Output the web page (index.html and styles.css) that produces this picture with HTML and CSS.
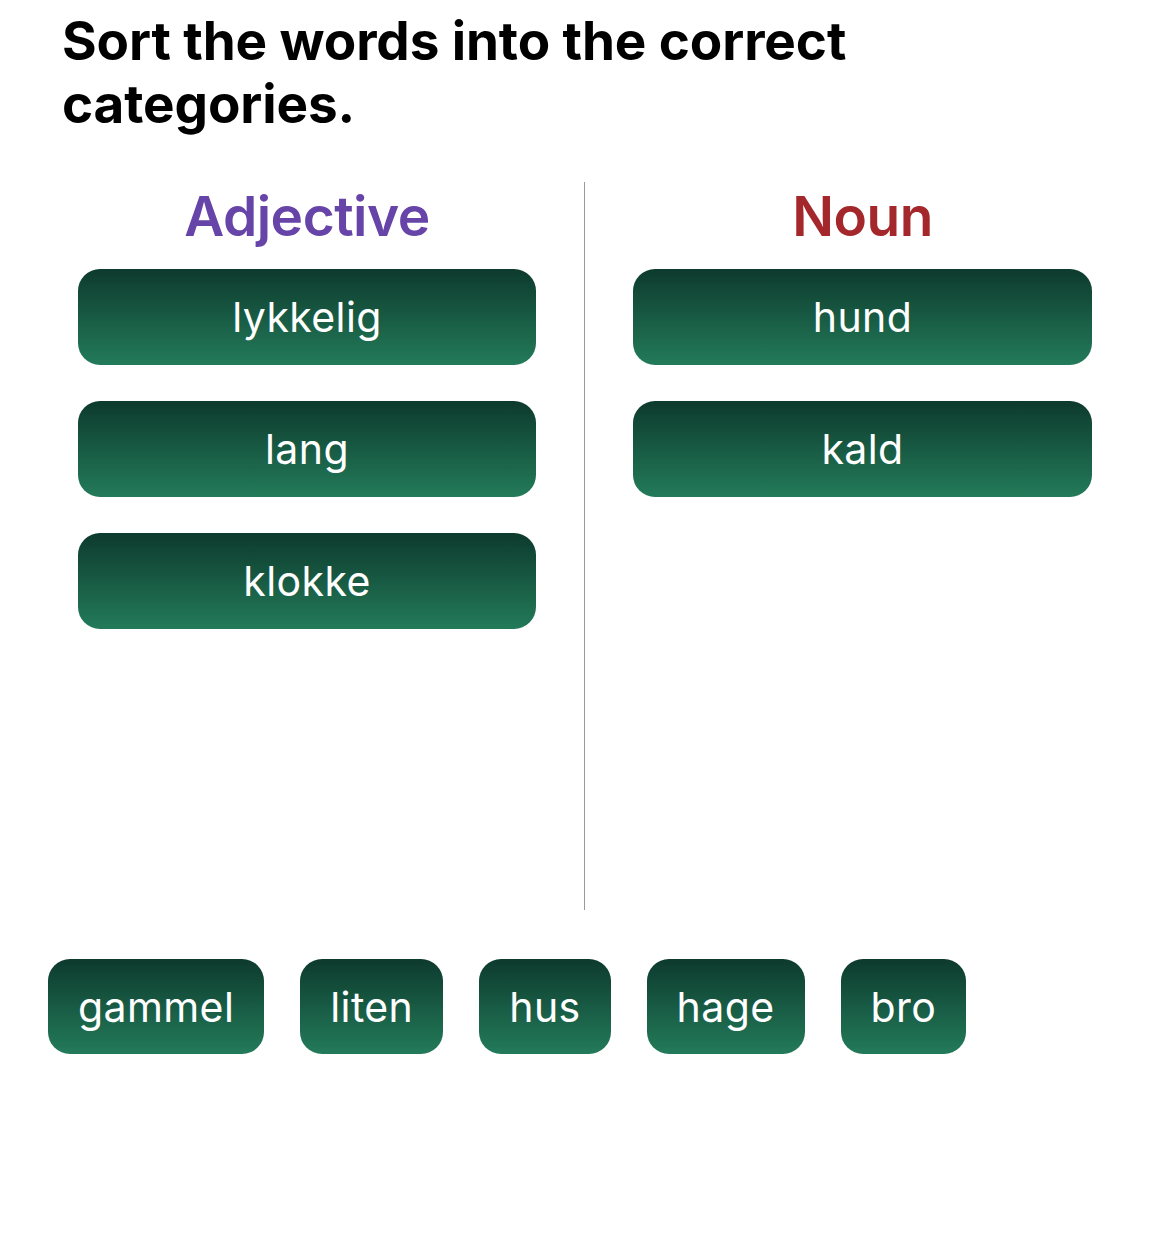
FILE: index.html
```html
<!DOCTYPE html>
<html>
<head>
<meta charset="utf-8">
<link rel="stylesheet" href="styles.css">
</head>
<body>
<div class="page">
  <h1 class="title">Sort the words into the correct categories.</h1>
  <div class="board">
    <div class="column left">
      <h2 class="heading adjective">Adjective</h2>
      <div class="list">
        <div class="word wide">lykkelig</div>
        <div class="word wide">lang</div>
        <div class="word wide">klokke</div>
      </div>
    </div>
    <div class="divider"></div>
    <div class="column right">
      <h2 class="heading noun">Noun</h2>
      <div class="list">
        <div class="word wide">hund</div>
        <div class="word wide">kald</div>
      </div>
    </div>
  </div>
  <div class="bank">
    <div class="word chip">gammel</div>
    <div class="word chip">liten</div>
    <div class="word chip">hus</div>
    <div class="word chip">hage</div>
    <div class="word chip">bro</div>
  </div>
</div>
</body>
</html>
```

FILE: styles.css
```css
html, body {
  margin: 0;
  padding: 0;
  background: #ffffff;
}
body {
  font-family: Inter, "Noto Sans", sans-serif;
  color: #000;
}
.page {
  width: 1170px;
  padding-top: 10px;
}
.title {
  margin: 0 0 0 62px;
  width: 840px;
  font-size: 53px;
  line-height: 63px;
  font-weight: 700;
  letter-spacing: -0.1px;
}
.board {
  display: flex;
  gap: 48px;
  padding: 0 78px;
  margin-top: 46px;
  height: 728px;
}
.column {
  display: flex;
  flex-direction: column;
}
.left { width: 458px; }
.right { width: 459px; }
.divider {
  width: 1px;
  background: #9a9a9a;
}
.heading {
  margin: 0;
  text-align: center;
  font-size: 55px;
  font-weight: 600;
  line-height: 68px;
  height: 87px;
  letter-spacing: -0.5px;
}
.adjective { color: #6744a8; }
.noun { color: #a4282b; }
.list {
  display: flex;
  flex-direction: column;
  gap: 36px;
}
.word {
  height: 96px;
  border-radius: 22px;
  background: linear-gradient(to bottom, #0d3a2d, #237b5a);
  color: #ffffff;
  display: flex;
  align-items: center;
  justify-content: center;
  font-size: 41px;
  font-weight: 400;
  letter-spacing: 0.4px;
  box-sizing: border-box;
}
.bank {
  display: flex;
  gap: 36px;
  padding: 0 48px;
  margin-top: 49px;
}
.chip {
  height: 95px;
  padding: 0 30px;
}
```
